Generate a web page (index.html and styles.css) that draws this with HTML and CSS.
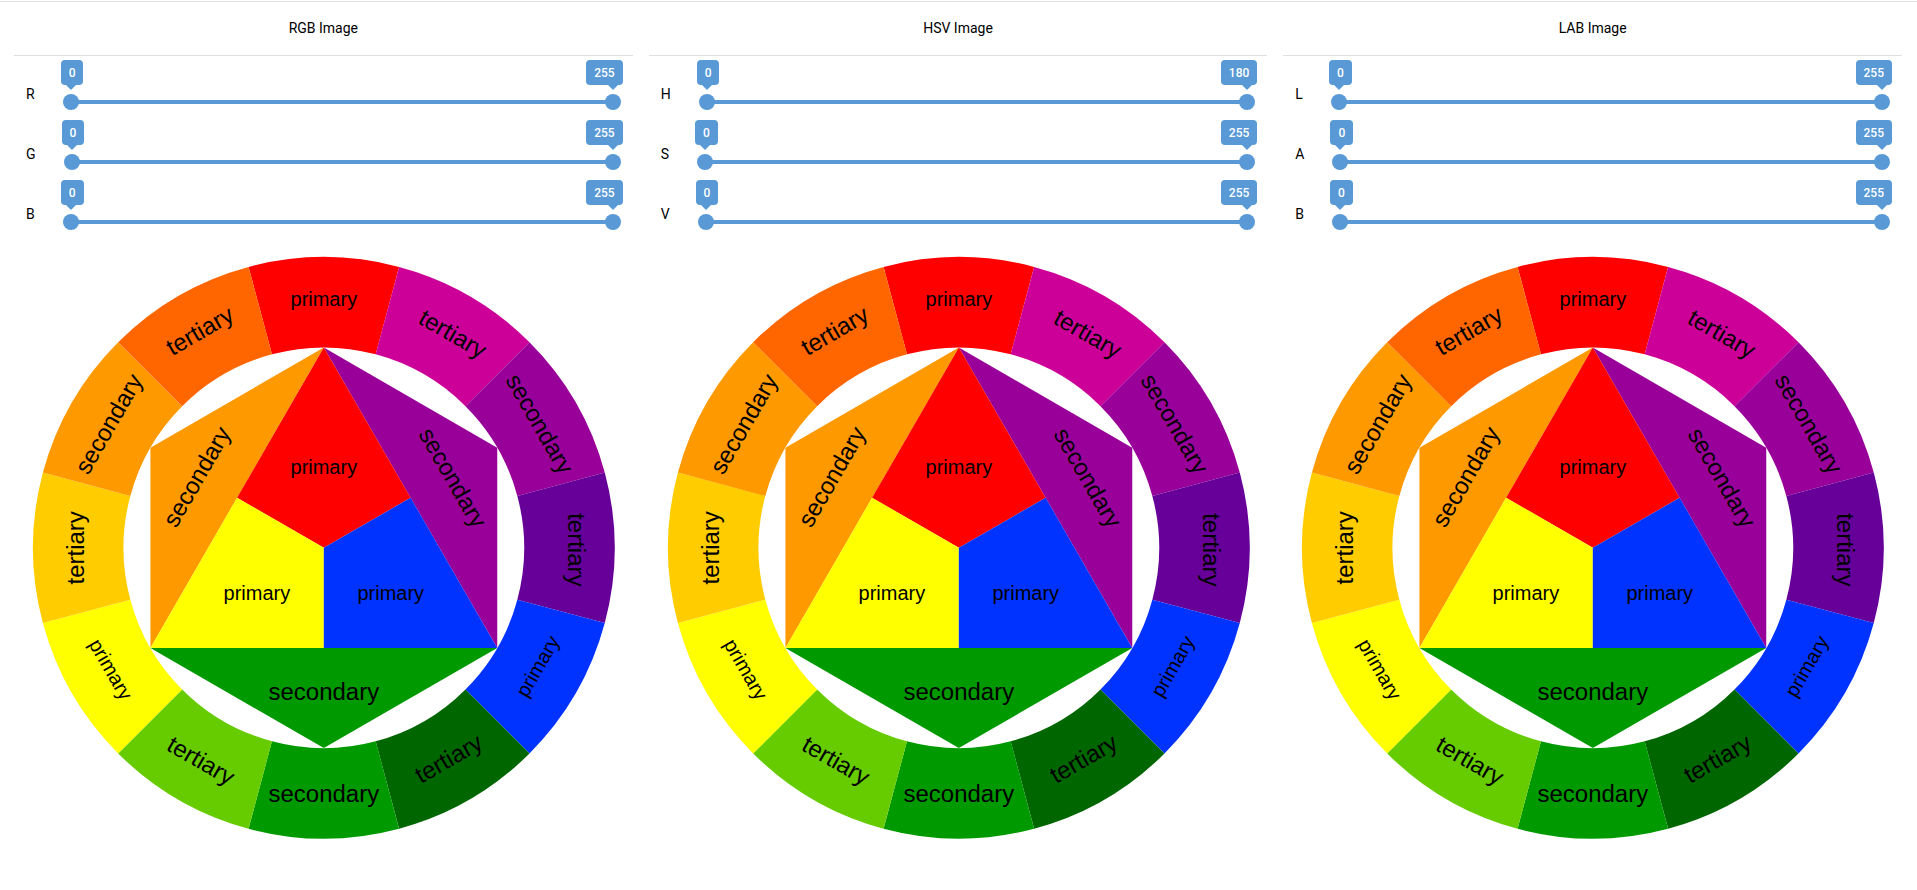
FILE: index.html
```html
<!DOCTYPE html>
<html lang="en">
<head>
<meta charset="utf-8">
<title>Color spaces</title>
<link rel="stylesheet" href="styles.css">
</head>
<body>
<main class="panels">
  <section class="panel">
    <h2 class="panel-title">RGB Image</h2>
    <div class="channel" data-name="R" data-max="255"></div>
    <div class="channel" data-name="G" data-max="255"></div>
    <div class="channel" data-name="B" data-max="255"></div>
    <figure class="picture"></figure>
  </section>
  <section class="panel">
    <h2 class="panel-title">HSV Image</h2>
    <div class="channel" data-name="H" data-max="180"></div>
    <div class="channel" data-name="S" data-max="255"></div>
    <div class="channel" data-name="V" data-max="255"></div>
    <figure class="picture"></figure>
  </section>
  <section class="panel">
    <h2 class="panel-title">LAB Image</h2>
    <div class="channel" data-name="L" data-max="255"></div>
    <div class="channel" data-name="A" data-max="255"></div>
    <div class="channel" data-name="B" data-max="255"></div>
    <figure class="picture"></figure>
  </section>
</main>

<template id="channel-template">
  <label class="channel-name"></label>
  <div class="range">
    <div class="bubbles">
      <output class="bubble bubble-low"></output>
      <output class="bubble bubble-high"></output>
    </div>
    <div class="track">
      <input class="thumb low" type="range" min="0">
      <input class="thumb high" type="range" min="0">
    </div>
  </div>
</template>

<template id="wheel-template">
  <svg class="wheel" viewBox="-310 -312 619 624" role="img" aria-label="Color wheel">
    <g class="ring">
      <path fill="#f00" d="M-75.3-281.1A291 291 0 0 1 75.3-281.1L51.9-193.6A200.4 200.4 0 0 0-51.9-193.6Z"/>
      <path fill="#c09" transform="rotate(30)" d="M-75.3-281.1A291 291 0 0 1 75.3-281.1L51.9-193.6A200.4 200.4 0 0 0-51.9-193.6Z"/>
      <path fill="#909" transform="rotate(60)" d="M-75.3-281.1A291 291 0 0 1 75.3-281.1L51.9-193.6A200.4 200.4 0 0 0-51.9-193.6Z"/>
      <path fill="#609" transform="rotate(90)" d="M-75.3-281.1A291 291 0 0 1 75.3-281.1L51.9-193.6A200.4 200.4 0 0 0-51.9-193.6Z"/>
      <path fill="#03f" transform="rotate(120)" d="M-75.3-281.1A291 291 0 0 1 75.3-281.1L51.9-193.6A200.4 200.4 0 0 0-51.9-193.6Z"/>
      <path fill="#060" transform="rotate(150)" d="M-75.3-281.1A291 291 0 0 1 75.3-281.1L51.9-193.6A200.4 200.4 0 0 0-51.9-193.6Z"/>
      <path fill="#090" transform="rotate(180)" d="M-75.3-281.1A291 291 0 0 1 75.3-281.1L51.9-193.6A200.4 200.4 0 0 0-51.9-193.6Z"/>
      <path fill="#6c0" transform="rotate(210)" d="M-75.3-281.1A291 291 0 0 1 75.3-281.1L51.9-193.6A200.4 200.4 0 0 0-51.9-193.6Z"/>
      <path fill="#ff0" transform="rotate(240)" d="M-75.3-281.1A291 291 0 0 1 75.3-281.1L51.9-193.6A200.4 200.4 0 0 0-51.9-193.6Z"/>
      <path fill="#fc0" transform="rotate(270)" d="M-75.3-281.1A291 291 0 0 1 75.3-281.1L51.9-193.6A200.4 200.4 0 0 0-51.9-193.6Z"/>
      <path fill="#f90" transform="rotate(300)" d="M-75.3-281.1A291 291 0 0 1 75.3-281.1L51.9-193.6A200.4 200.4 0 0 0-51.9-193.6Z"/>
      <path fill="#f60" transform="rotate(330)" d="M-75.3-281.1A291 291 0 0 1 75.3-281.1L51.9-193.6A200.4 200.4 0 0 0-51.9-193.6Z"/>
    </g>
    <path fill="#f90" d="M0-200.4L-173.5-100.2V100.2Z"/>
    <path fill="#909" d="M0-200.4L173.5-100.2V100.2Z"/>
    <path fill="#090" d="M-173.5 100.2H173.5L0 200.4Z"/>
    <path fill="#f00" d="M0-200.4L86.8-50.1 0 0-86.8-50.1Z"/>
    <path fill="#ff0" d="M0 0V100.2H-173.5L-86.8-50.1Z"/>
    <path fill="#03f" d="M0 0V100.2H173.5L86.8-50.1Z"/>
    <g class="wheel-text">
      <text class="small" transform="translate(0 -242)">primary</text>
      <text transform="translate(125 -207) rotate(30)">tertiary</text>
      <text transform="translate(209 -120) rotate(60)">secondary</text>
      <text transform="translate(244 2) rotate(90)">tertiary</text>
      <text class="small" transform="translate(220 122) rotate(-60)">primary</text>
      <text transform="translate(129 218) rotate(-30)">tertiary</text>
      <text transform="translate(0 254)">secondary</text>
      <text transform="translate(-127 220) rotate(30)">tertiary</text>
      <text class="small" transform="translate(-219 125) rotate(60)">primary</text>
      <text transform="translate(-240 0) rotate(-90)">tertiary</text>
      <text transform="translate(-208 -120) rotate(-60)">secondary</text>
      <text transform="translate(-120 -210) rotate(-30)">tertiary</text>
      <text class="small" transform="translate(0 -74)">primary</text>
      <text class="small" transform="translate(-67 52)">primary</text>
      <text class="small" transform="translate(67 52)">primary</text>
      <text transform="translate(0 152)">secondary</text>
      <text transform="translate(-120 -67) rotate(-60)">secondary</text>
      <text transform="translate(122 -66) rotate(60)">secondary</text>
    </g>
  </svg>
</template>
<script src="script.js"></script>
</body>
</html>
```

FILE: styles.css
```css
:root {
  --blue: #5899d6;
  --line: #e0e0e0;
}

* {
  box-sizing: border-box;
}

body {
  margin: 0;
  padding-top: 1px;
  background: #fff;
  color: #000;
  font: 14px/20px Roboto, sans-serif;
}

.panels {
  display: grid;
  grid-template-columns: repeat(3, minmax(0, 1fr));
  column-gap: 16px;
  padding: 0 15px 0 14px;
  border-top: 1px solid var(--line);
}

.panel-title {
  margin: 0;
  padding: 16px 0 17px;
  border-bottom: 1px solid var(--line);
  font-size: 14px;
  font-weight: 400;
  text-align: center;
}

.channel {
  display: flex;
  align-items: flex-start;
  gap: 28px;
  height: 60px;
  padding: 4px 12px 0;
}

.channel-name {
  padding-top: 24px;
}

.range {
  flex: 1;
  min-width: 0;
}

.bubbles {
  display: flex;
  justify-content: space-between;
  margin: 0 -2px 9px;
}

.bubble {
  position: relative;
  height: 25px;
  padding: 0 8px;
  border-radius: 4px;
  background: var(--blue);
  color: #fff;
  font-size: 12px;
  font-weight: 500;
  line-height: 26px;
}

.bubble::after {
  content: "";
  position: absolute;
  top: 100%;
  border: 5px solid transparent;
  border-top-color: var(--blue);
  border-bottom: 0;
}

.bubble-low::after {
  left: 5px;
}

.bubble-high::after {
  right: 5px;
}

.track {
  display: grid;
  align-items: center;
  height: 16px;
  background: linear-gradient(var(--blue), var(--blue)) center / calc(100% - 16px) 4px no-repeat;
}

.thumb {
  grid-area: 1 / 1;
  width: 100%;
  height: 16px;
  margin: 0;
  appearance: none;
  background: none;
  pointer-events: none;
}

.thumb::-webkit-slider-thumb {
  width: 16px;
  height: 16px;
  appearance: none;
  border: 0;
  border-radius: 50%;
  background: var(--blue);
  pointer-events: auto;
}

.picture {
  margin: 0;
}

.wheel {
  display: block;
  width: 100%;
}

.wheel-text {
  fill: #000;
  font-family: "Liberation Sans", Arial, sans-serif;
  font-size: 24px;
  text-anchor: middle;
}

.small {
  font-size: 20px;
}
```

FILE: script.js
```js
const channelTemplate = document.getElementById("channel-template");
const wheelTemplate = document.getElementById("wheel-template");

document.querySelectorAll(".channel").forEach((row, i) => {
  const { name, max } = row.dataset;
  row.append(channelTemplate.content.cloneNode(true));

  const label = row.querySelector("label");
  label.textContent = name;
  label.htmlFor = "low-" + i;

  for (const end of ["low", "high"]) {
    const input = row.querySelector("." + end);
    const bubble = row.querySelector(".bubble-" + end);
    input.id = end + "-" + i;
    input.max = max;
    input.value = end === "low" ? 0 : max;
    input.setAttribute("aria-label", name + " " + end);
    bubble.htmlFor = input.id;
    bubble.textContent = input.value;
    input.addEventListener("input", () => {
      bubble.textContent = input.value;
    });
  }
});

document.querySelectorAll(".picture").forEach((figure) => {
  figure.append(wheelTemplate.content.cloneNode(true));
});
```
